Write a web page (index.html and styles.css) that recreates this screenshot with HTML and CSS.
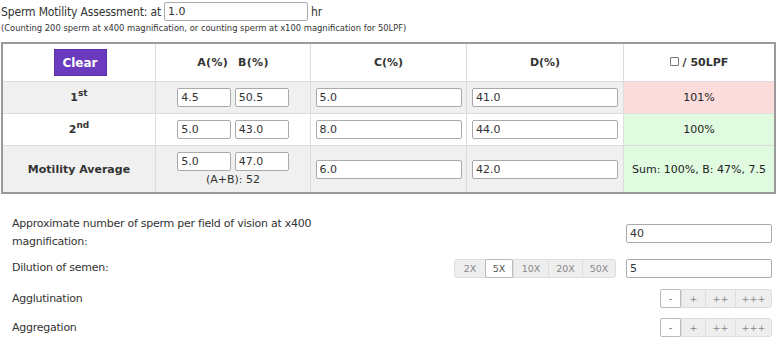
FILE: index.html
```html
<!DOCTYPE html>
<html lang="en">
<head>
    <meta charset="UTF-8">
    <title>Sperm Motility Assessment</title>
    <link rel="stylesheet" href="styles.css">
</head>
<body>

    <!-- Cabecalho -->
    <div class="title-line">
        <span>Sperm Motility Assessment: at</span>
        <input type="text" class="txt hr-input" value="1.0">
        <span>hr</span>
    </div>
    <div class="hint">(Counting 200 sperm at x400 magnification, or counting sperm at x100 magnification for 50LPF)</div>

    <!-- Tabela de motilidade -->
    <table class="motility">
        <tr class="head">
            <td class="c1"><button class="clear-btn">Clear</button></td>
            <td class="c2"><span class="ab">A(%)</span><span class="ab">B(%)</span></td>
            <td class="c3">C(%)</td>
            <td class="c4">D(%)</td>
            <td class="c5"><span class="chk"></span> / 50LPF</td>
        </tr>
        <tr class="shade">
            <th>1<sup>st</sup></th>
            <td><input class="txt small" value="4.5"> <input class="txt small" value="50.5"></td>
            <td><input class="txt wide" value="5.0"></td>
            <td><input class="txt wide" value="41.0"></td>
            <td class="bad">101%</td>
        </tr>
        <tr>
            <th>2<sup>nd</sup></th>
            <td><input class="txt small" value="5.0"> <input class="txt small" value="43.0"></td>
            <td><input class="txt wide" value="8.0"></td>
            <td><input class="txt wide" value="44.0"></td>
            <td class="good">100%</td>
        </tr>
        <tr class="shade avg">
            <th>Motility Average</th>
            <td>
                <input class="txt small" value="5.0"> <input class="txt small" value="47.0">
                <div class="sum">(A+B): 52</div>
            </td>
            <td><input class="txt wide" value="6.0"></td>
            <td><input class="txt wide" value="42.0"></td>
            <td class="good">Sum: 100%, B: 47%, 7.5</td>
        </tr>
    </table>

    <!-- Campos adicionais -->
    <div class="fields">
        <div class="label">Approximate number of sperm per field of vision at x400 magnification:</div>
        <div></div>
        <div><input class="txt field" value="40"></div>

        <div class="label">Dilution of semen:</div>
        <div class="mid">
            <div class="btn-group dil">
                <span>2X</span><span class="on">5X</span><span>10X</span><span>20X</span><span>50X</span>
            </div>
        </div>
        <div><input class="txt field" value="5"></div>

        <div class="label">Agglutination</div>
        <div></div>
        <div class="right">
            <div class="btn-group grade">
                <span class="on">-</span><span>+</span><span>++</span><span>+++</span>
            </div>
        </div>

        <div class="label">Aggregation</div>
        <div></div>
        <div class="right">
            <div class="btn-group grade">
                <span class="on">-</span><span>+</span><span>++</span><span>+++</span>
            </div>
        </div>
    </div>

</body>
</html>
```

FILE: styles.css
```css
/* Estilos gerais */
body {
    font-family: "DejaVu Sans", Verdana, sans-serif;
    font-size: 11px;
    color: #222;
    margin: 0;
    padding: 2px 2px 0 1px;
}

.txt {
    font-family: "DejaVu Sans", Verdana, sans-serif;
    font-size: 11px;
    color: #333;
    height: 19px;
    box-sizing: border-box;
    border: 1px solid #aaa;
    border-radius: 2px;
    padding: 0 3px;
    margin: 0;
    background: #fff;
    vertical-align: middle;
}

/* Cabecalho */
.title-line {
    display: flex;
    align-items: center;
    gap: 3px;
    font-family: "DejaVu Sans Condensed", "DejaVu Sans", sans-serif;
    font-size: 12px;
    letter-spacing: -0.15px;
    color: #333;
    height: 19px;
}

.title-line .hr-input {
    width: 144px;
    flex: none;
    letter-spacing: 0;
}

.hint {
    font-size: 8.4px;
    color: #333;
    margin-top: 2px;
}

/* Tabela */
.motility {
    margin-top: 9px;
    width: 775px;
    border-collapse: collapse;
    border: 2px solid #9a9a9a;
    table-layout: fixed;
}

.motility td,
.motility th {
    border: 1px solid #ddd;
    text-align: center;
    padding: 0;
    height: 31px;
}

.motility th {
    font-weight: bold;
    color: #333;
}

.motility sup {
    font-size: 9px;
    line-height: 0;
}

.motility .head td {
    height: 37px;
    font-weight: bold;
    color: #333;
    background: #fff;
}

.c1 { width: 152px; }
.c2 { width: 154px; }
.c3 { width: 155px; }
.c4 { width: 156px; }

.ab {
    margin: 0 5px;
    letter-spacing: 0.3px;
}

.chk {
    display: inline-block;
    width: 7px;
    height: 7px;
    border: 1px solid #777;
    border-radius: 1px;
    vertical-align: 0;
}

.clear-btn {
    background: #6a3bbf;
    color: #fff;
    border: 1px solid #5a2fa8;
    font-family: "DejaVu Sans", Verdana, sans-serif;
    font-size: 12px;
    font-weight: bold;
    width: 53px;
    height: 27px;
    padding: 0;
    margin-left: 2px;
}

.shade td,
.shade th {
    background: #f0f0f0;
}

.small { width: 54px; }
.wide { width: 146px; }

.motility td.bad { background: #fddcdc; }
.motility td.good { background: #e0fbdf; }

.motility .avg td,
.motility .avg th {
    height: 46px;
}

.sum {
    margin-top: 2px;
    color: #333;
}

/* Campos adicionais */
.fields {
    display: grid;
    grid-template-columns: 330px 1fr 146px;
    column-gap: 10px;
    margin-top: 20px;
    padding: 0 4px 0 11px;
    color: #333;
}

.fields > div {
    display: flex;
    align-items: center;
}

.fields .label {
    font-size: 11px;
    line-height: 18px;
    letter-spacing: -0.25px;
}

.fields > div:nth-child(-n+3) { min-height: 38px; }
.fields > div:nth-child(n+4):nth-child(-n+6) { min-height: 32px; }
.fields > div:nth-child(n+7) { min-height: 29px; }

.mid, .right { justify-content: flex-end; }

.field {
    width: 146px;
}

.btn-group {
    display: flex;
    border: 1px solid #ddd;
    border-radius: 3px;
    background: #eee;
}

.btn-group span {
    box-sizing: border-box;
    font-size: 9.5px;
    color: #888;
    height: 17px;
    line-height: 17px;
    border-left: 1px solid #ddd;
    text-align: center;
}

.btn-group span:first-child { border-left: none; }

.btn-group span.on {
    background: #fff;
    color: #555;
    border: 1px solid #bbb;
    margin: -1px 0;
    height: 19px;
    border-radius: 2px;
}

.dil span:nth-child(1) { width: 30px; }
.dil span:nth-child(2) { width: 28px; }
.dil span:nth-child(3) { width: 35px; }
.dil span:nth-child(4) { width: 34px; }
.dil span:nth-child(5) { width: 33px; }

.grade span:nth-child(1) { width: 21px; margin-left: -1px; }
.grade span:nth-child(2) { width: 24px; }
.grade span:nth-child(3) { width: 30px; }
.grade span:nth-child(4) { width: 36px; }
```
